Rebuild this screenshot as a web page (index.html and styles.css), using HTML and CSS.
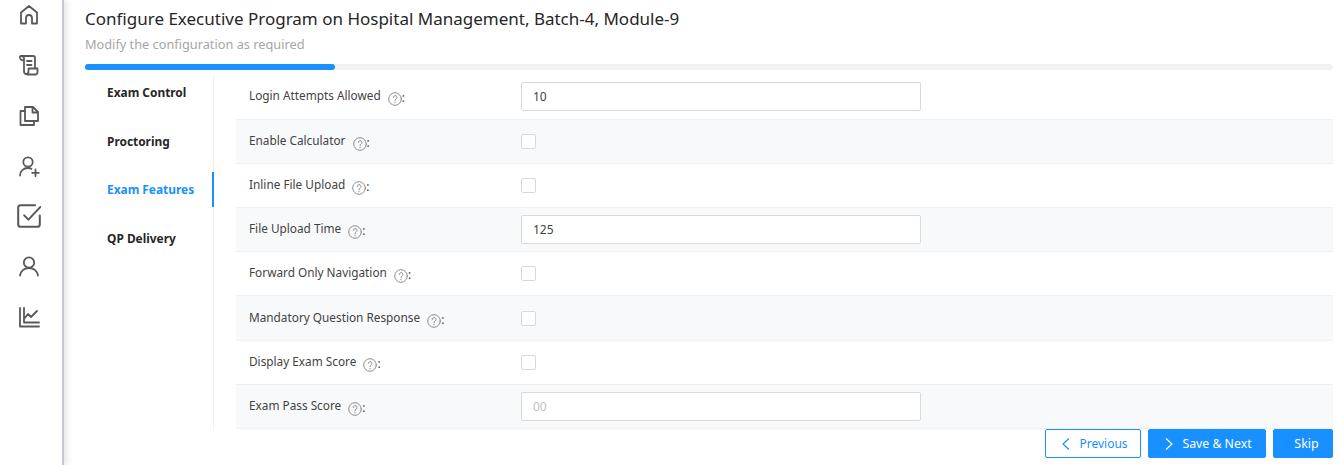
FILE: index.html
```html
<!DOCTYPE html>
<html lang="en">
<head>
  <meta charset="UTF-8">
  <title>Configure Exam</title>
  <link rel="stylesheet" href="styles.css">
</head>
<body>
  <div class="layout">
    <aside class="sidebar">
      <svg class="side-icon" viewBox="0 0 24 24"><path d="M4 20.500V9.500L12 3l8 6.500v11h-5v-5.500a3 3 0 0 0-6 0v5.500z"/></svg>
      <svg class="side-icon" viewBox="0 0 24 24"><path d="M7 18V5.500A2.500 2.500 0 0 0 4.500 3H3.500M4.500 3H16a2 2 0 0 1 2 2v10M3 3.500C2.500 6 4 7.500 7 7.500M10 8h4.500M10 12h4.500M7 18c0 2 1.500 3.500 3.500 3.500H18.500c1.500 0 2-1 2-2.500v-3.500H11.500v3c0 1.500-1 2.500-2.500 2.500"/></svg>
      <svg class="side-icon" viewBox="0 0 24 24"><path d="M8 3h8l5 5v9H8zM15.500 3v5.500H21M8 7H3.500v14H17v-4"/></svg>
      <svg class="side-icon" viewBox="0 0 24 24"><circle cx="11" cy="8" r="4.700"/><path d="M3 21.500c0-4.500 3.500-7.500 8-7.500 1.500 0 2.500.3 3.500.8M18.500 15.500v6.500M15.200 18.800h6.600"/></svg>
      <svg class="side-icon side-icon-big" viewBox="2 2 20 20"><path d="M21 11.500V19a2 2 0 0 1-2 2H5a2 2 0 0 1-2-2V5a2 2 0 0 1 2-2h12M8 11.500l3.500 3.500L21.500 4.500"/></svg>
      <svg class="side-icon" viewBox="0 0 24 24"><circle cx="12" cy="8.500" r="5.200"/><path d="M3 21.500c.8-4.500 4.500-7.500 9-7.500s8.200 3 9 7.500"/></svg>
      <svg class="side-icon" viewBox="0 0 24 24"><path d="M3 3v18.500h19M7 3v14.500h15M7 14l4-5 3 3 6-6"/></svg>
    </aside>

    <main class="content">
      <h1 class="page-title">Configure Executive Program on Hospital Management, Batch-4, Module-9</h1>
      <p class="page-sub">Modify the configuration as required</p>
      <div class="progress"><div class="progress-fill"></div></div>

      <div class="panel">
        <ul class="tabs">
          <li class="tab">Exam Control</li>
          <li class="tab">Proctoring</li>
          <li class="tab active">Exam Features</li>
          <li class="tab">QP Delivery</li>
        </ul>

        <div class="rows">
          <div class="row row-first">
            <div class="label"><span class="label-text">Login Attempts Allowed</span> <svg class="help" viewBox="0 0 14 14"><circle cx="7" cy="7" r="6.300"/><path d="M5.200 5.500a1.900 1.900 0 1 1 2.900 1.600c-.7.400-1.100.8-1.100 1.500M7 10.200v.6"/></svg>:</div>
            <input class="field" type="text" value="10">
          </div>
          <div class="row alt">
            <div class="label"><span class="label-text">Enable Calculator</span> <svg class="help" viewBox="0 0 14 14"><circle cx="7" cy="7" r="6.300"/><path d="M5.200 5.500a1.900 1.900 0 1 1 2.900 1.600c-.7.400-1.100.8-1.100 1.500M7 10.200v.6"/></svg>:</div>
            <span class="check"></span>
          </div>
          <div class="row">
            <div class="label"><span class="label-text">Inline File Upload</span> <svg class="help" viewBox="0 0 14 14"><circle cx="7" cy="7" r="6.300"/><path d="M5.200 5.500a1.900 1.900 0 1 1 2.900 1.600c-.7.400-1.100.8-1.100 1.500M7 10.200v.6"/></svg>:</div>
            <span class="check"></span>
          </div>
          <div class="row alt">
            <div class="label"><span class="label-text">File Upload Time</span> <svg class="help" viewBox="0 0 14 14"><circle cx="7" cy="7" r="6.300"/><path d="M5.200 5.500a1.900 1.900 0 1 1 2.900 1.600c-.7.400-1.100.8-1.100 1.500M7 10.200v.6"/></svg>:</div>
            <input class="field" type="text" value="125">
          </div>
          <div class="row">
            <div class="label"><span class="label-text">Forward Only Navigation</span> <svg class="help" viewBox="0 0 14 14"><circle cx="7" cy="7" r="6.300"/><path d="M5.200 5.500a1.900 1.900 0 1 1 2.900 1.600c-.7.400-1.100.8-1.100 1.500M7 10.200v.6"/></svg>:</div>
            <span class="check"></span>
          </div>
          <div class="row alt row-tall">
            <div class="label"><span class="label-text">Mandatory Question Response</span> <svg class="help" viewBox="0 0 14 14"><circle cx="7" cy="7" r="6.300"/><path d="M5.200 5.500a1.900 1.900 0 1 1 2.900 1.600c-.7.400-1.100.8-1.100 1.500M7 10.200v.6"/></svg>:</div>
            <span class="check"></span>
          </div>
          <div class="row">
            <div class="label"><span class="label-text">Display Exam Score</span> <svg class="help" viewBox="0 0 14 14"><circle cx="7" cy="7" r="6.300"/><path d="M5.200 5.500a1.900 1.900 0 1 1 2.900 1.600c-.7.400-1.100.8-1.100 1.500M7 10.200v.6"/></svg>:</div>
            <span class="check"></span>
          </div>
          <div class="row alt">
            <div class="label"><span class="label-text">Exam Pass Score</span> <svg class="help" viewBox="0 0 14 14"><circle cx="7" cy="7" r="6.300"/><path d="M5.200 5.500a1.900 1.900 0 1 1 2.900 1.600c-.7.400-1.100.8-1.100 1.500M7 10.200v.6"/></svg>:</div>
            <input class="field" type="text" placeholder="00">
          </div>
        </div>
      </div>

      <div class="actions">
        <button class="btn btn-outline"><svg class="chev" viewBox="0 0 10 14"><path d="M8 1.500L2 7l6 5.500"/></svg>Previous</button>
        <button class="btn btn-save"><svg class="chev" viewBox="0 0 10 14"><path d="M2 1.500L8 7l-6 5.500"/></svg>Save &amp; Next</button>
        <button class="btn btn-skip">Skip</button>
      </div>
    </main>
  </div>
</body>
</html>
```
FILE: styles.css
```css
* { box-sizing: border-box; }
html, body { height: 100%; }
body { margin: 0; background: #fff; font-family: "Noto Sans", "Open Sans", Arial, sans-serif; color: #262626; overflow: hidden; }

.layout { display: flex; height: 465px; }

.sidebar { width: 64px; flex: none; display: flex; flex-direction: column; align-items: center; gap: 26.300px; padding: 3px 4px 0 0; border-right: 2px solid #c6c9d2; box-shadow: 3px 0 6px rgba(0,0,0,0.10); }
.side-icon { width: 24px; height: 24px; fill: none; stroke: #595959; stroke-width: 1.800; stroke-linecap: round; stroke-linejoin: round; }
.side-icon-big { stroke-width: 1.700; }

.content { flex: 1; padding: 8px 6px 0 21px; min-width: 0; }
.page-title { margin: 0; font-size: 17px; line-height: 22px; font-weight: 400; color: #262626; }
.page-sub { margin: 6px 0 0; font-size: 12.750px; line-height: 16px; font-weight: 400; color: #a6a6a6; }

.progress { height: 6px; margin-top: 12px; background: #f2f2f2; border-radius: 3px; }
.progress-fill { width: 250px; height: 100%; background: #1890ff; border-radius: 3px; }

.panel { display: flex; margin-top: 6px; }

.tabs { width: 129px; flex: none; margin: 0; padding: 0; list-style: none; border-right: 1px solid #f0f0f0; }
.tab { height: 35px; margin-bottom: 13.500px; padding-left: 22px; font-size: 11.900px; font-weight: 700; line-height: 33px; color: #262626; }
.tab.active { color: #1890ff; border-right: 2px solid #1890ff; margin: -1px -1px 14.500px 0; line-height: 35px; }

.rows { flex: 1; margin-left: 22px; min-width: 0; }
.row { display: flex; align-items: center; height: 44px; padding-left: 13px; border-bottom: 1px solid #f0f0f0; }
.row.alt { background: #f8f9fa; }
.row-first { padding-bottom: 2px; }
.row-tall { height: 45px; }

.label { width: 272px; flex: none; font-size: 11.800px; line-height: 16px; color: #434343; white-space: nowrap; }
.label-text { vertical-align: 2px; }
.help { width: 14px; height: 14px; margin-left: 4px; vertical-align: -4px; fill: none; stroke: #8c8c8c; stroke-width: 1; stroke-linecap: round; }

.field { width: 400px; height: 29px; padding: 0 11px; font: 12px "Noto Sans", "Open Sans", Arial, sans-serif; color: #434343; background: #fff; border: 1px solid #d9d9d9; border-radius: 2px; outline: none; }
.field::placeholder { color: #bfbfbf; }

.check { width: 15px; height: 15px; background: #fff; border: 1px solid #d9d9d9; border-radius: 2px; }

.actions { display: flex; justify-content: flex-end; gap: 7px; }
.btn { display: flex; align-items: center; justify-content: center; height: 29px; padding: 0; font: 12px "Noto Sans", "Open Sans", Arial, sans-serif; border: 1px solid #1890ff; border-radius: 2px; }
.btn-outline { width: 96px; padding-left: 3px; background: #fff; color: #1890ff; }
.btn-save { width: 118px; padding-left: 2px; background: #1890ff; color: #fff; font-size: 12.300px; }
.btn-skip { width: 60px; padding-left: 7px; background: #1890ff; color: #fff; font-size: 12.500px; }
.chev { width: 10px; height: 14px; margin-right: 8px; fill: none; stroke: currentColor; stroke-width: 1.200; }
```
